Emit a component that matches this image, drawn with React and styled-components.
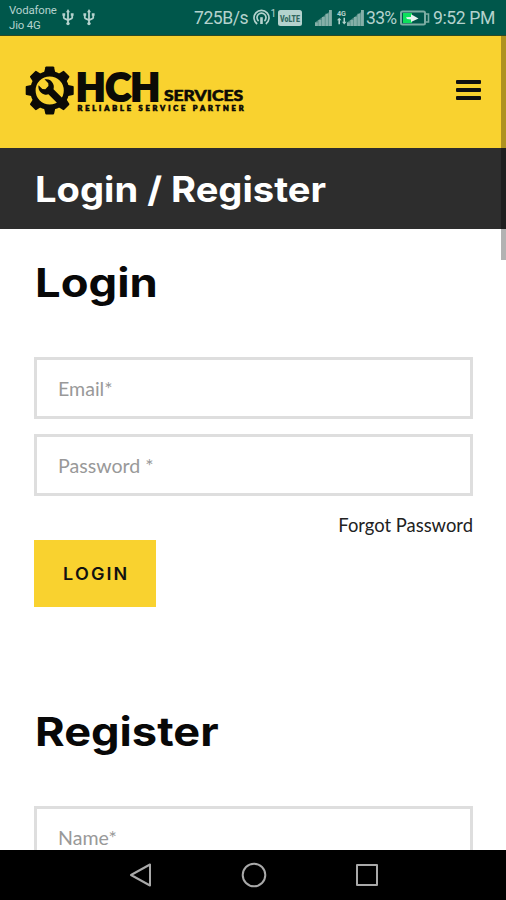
import React from "react";
import styled, { createGlobalStyle } from "styled-components";

const GlobalStyle = createGlobalStyle`
  * { box-sizing: border-box; }
  body { margin: 0; background: #fff; }
`;

const Screen = styled.div`
  position: relative;
  display: flex;
  flex-direction: column;
  width: 506px;
  height: 900px;
  overflow: hidden;
  background: #fff;
  font-family: Lato, "Open Sans", sans-serif;
`;

const StatusBar = styled.header`
  display: flex;
  align-items: center;
  flex: none;
  height: 36px;
  padding-left: 9px;
  background: #00574b;
  border-bottom: 1px solid #2f4a25;
  color: #b4d2cd;
  font-family: Roboto, sans-serif;
`;

const Carrier = styled.div`
  width: 53px;
  font-size: 11.4px;
  line-height: 15.5px;
  letter-spacing: -0.15px;
  padding-top: 1px;
  white-space: nowrap;
`;

const StatusText = styled.span`
  flex: none;
  width: ${(p) => p.$width}px;
  margin-left: ${(p) => p.$gap || 0}px;
  font-size: ${(p) => p.$size || 18}px;
  line-height: 20px;
  letter-spacing: ${(p) => p.$spacing || 0}px;
  white-space: nowrap;
`;

const StatusIcon = styled.svg`
  flex: none;
  display: block;
  overflow: visible;
  margin-left: ${(p) => p.$gap || 0}px;
`;

const BrandBar = styled.div`
  display: flex;
  align-items: center;
  justify-content: space-between;
  flex: none;
  height: 112px;
  padding: 0 25px 4px 20px;
  background: #f9d22f;
`;

const MenuButton = styled.button`
  display: flex;
  flex-direction: column;
  gap: 4.5px;
  width: 25px;
  padding: 0;
  border: 0;
  background: none;
`;

const MenuLine = styled.span`
  height: 3.6px;
  border-radius: 1px;
  background: #111;
`;

const TitleBand = styled.div`
  display: flex;
  flex: none;
  align-items: center;
  height: 81px;
  padding: 0 35px;
  background: #2d2d2d;
`;

const Heading = styled.h2`
  margin: 0;
  width: max-content;
  color: ${(p) => p.$color || "#080808"};
  font-family: Inter, sans-serif;
  font-weight: 700;
  font-size: ${(p) => p.$size || 40}px;
  line-height: 48px;
  white-space: nowrap;
  transform: scaleX(${(p) => p.$stretch || 1});
  transform-origin: left;
`;

const Content = styled.main`
  flex: 1;
  min-height: 0;
  overflow: hidden;
  padding: 30px 33px 0 34px;
`;

const Section = styled.section`
  height: ${(p) => p.$height || "auto"};
  ${Heading} { margin-left: 1px; }
`;

const Fields = styled.div`
  display: flex;
  flex-direction: column;
  gap: 15px;
  margin-top: 50px;
`;

const Field = styled.input`
  display: block;
  width: 100%;
  height: 62px;
  padding: 0 21px;
  border: 3px solid #dedede;
  border-radius: 0;
  background: #fff;
  font: 400 19.6px Lato, sans-serif;
  outline: none;
  &::placeholder { color: #999; opacity: 1; }
`;

const ForgotRow = styled.div`
  display: flex;
  justify-content: flex-end;
  height: 44px;
  padding-top: 17px;
  color: #222;
  font-size: 18.4px;
  line-height: 24px;
`;

const SubmitButton = styled.button`
  display: block;
  width: 122px;
  height: 67px;
  padding: 0 0 0 2px;
  border: 0;
  background: #f9d22f;
  color: #111;
  font: 600 17px Inter, sans-serif;
  letter-spacing: 2px;
`;

const SubmitLabel = styled.span`
  display: inline-block;
  transform: scaleX(1.06);
`;

const NavBar = styled.nav`
  display: flex;
  flex: none;
  align-items: center;
  justify-content: center;
  gap: 88px;
  height: 50px;
  padding-left: 2px;
  background: #000;
`;

const NavIcon = styled.svg`
  display: block;
  fill: none;
  stroke: #a9a9a9;
  stroke-width: 2;
  stroke-linejoin: round;
`;

const ScrollThumb = styled.div`
  position: absolute;
  top: 36px;
  right: 0;
  width: 5px;
  height: 224px;
  background: rgba(0, 0, 0, 0.3);
`;

function Usb({ gap }) {
  return (
    <StatusIcon $gap={gap} width="12" height="17" viewBox="0 0 12 17" fill="none" stroke="#b4d2cd" strokeWidth="1.8">
      <path d="M6 2v12M1.8 5.5v3.2c0 1.4 4.2 1.6 4.2 3.3M10.2 5.5v3.2c0 1.4-4.2 1.6-4.2 3.3" />
      <path d="M6 0 8 3.2H4ZM.4 4.2h2.8v2.6H.4ZM8.8 4.2h2.8v2.6H8.8Z" fill="#b4d2cd" stroke="none" />
      <circle cx="6" cy="14.6" r="1.7" fill="#b4d2cd" stroke="none" />
    </StatusIcon>
  );
}

function Signal({ gap }) {
  return (
    <StatusIcon $gap={gap} width="17" height="16" viewBox="0 0 17 16" fill="#86afa8">
      <path d="M0 12.5h2.8V16H0ZM3.5 10h2.8v6H3.5ZM7 7h2.8v9H7ZM10.5 3.8h2.8V16h-2.8ZM14 0h2.8v16H14Z" />
      <path d="M0 16v-3.5L16.8 0v16Z" opacity=".6" />
    </StatusIcon>
  );
}

const TEETH = [0, 45, 90, 135, 180, 225, 270, 315];

function Logo() {
  return (
    <svg width="230" height="60" viewBox="20 60 230 60" fill="#0c0b06">
      <g transform="translate(49.7 90.5)">
        {TEETH.map((angle) => (
          <path key={angle} d="M-6-16-4.4-23.3Q-4.2-24-3.4-24H3.4Q4.2-24 4.4-23.3L6-16Z" transform={`rotate(${angle})`} />
        ))}
        <circle r="16.8" fill="none" stroke="#0c0b06" strokeWidth="5.4" />
        <g transform="rotate(-45)">
          <path d="M-3.6 17V1.8A7.8 7.8 0 0 1-4.2-11.6V-6.2L-2.2-4H2.2L4.2-6.2V-11.6A7.8 7.8 0 0 1 3.6 1.8V17Z" />
        </g>
      </g>
      <g fontFamily="Lato, sans-serif" fontWeight="900" stroke="#0c0b06">
        <text x="76" y="101" fontSize="38" strokeWidth="2.2" textLength="84" lengthAdjust="spacingAndGlyphs">HCH</text>
        <text x="164" y="101.3" fontSize="15.8" strokeWidth=".6" textLength="79" lengthAdjust="spacingAndGlyphs">SERVICES</text>
        <text x="77.5" y="111" fontSize="7.4" strokeWidth=".7" textLength="166" lengthAdjust="spacing">RELIABLE SERVICE PARTNER</text>
      </g>
    </svg>
  );
}

export default function App() {
  return (
    <Screen>
      <GlobalStyle />
      <StatusBar>
        <Carrier>Vodafone<br />Jio 4G</Carrier>
        <Usb />
        <Usb gap={9} />
        <StatusText $gap={99} $width={54} $size={17.6} $spacing={-0.5}>725B/s</StatusText>
        <StatusIcon $gap={5} width="17" height="17" viewBox="0 0 17 17" fill="none" stroke="#b4d2cd" strokeWidth="1.7">
          <path d="M4.2 15A7.5 7.5 0 1 1 12.8 15M5.6 12A4.5 4.5 0 1 1 11.4 12" />
          <path d="M8.5 8.2V15" strokeWidth="2.6" />
        </StatusIcon>
        <StatusIcon width="7" height="17" viewBox="0 0 7 17" fill="#b4d2cd">
          <text x="0.5" y="8" fontSize="10" fontFamily="Roboto">1</text>
        </StatusIcon>
        <StatusIcon $gap={1} width="24" height="16" viewBox="0 0 24 16">
          <rect width="24" height="16" rx="2.5" fill="#b4d2cd" />
          <text x="2" y="11.5" fontSize="9.5" fontWeight="900" fontFamily="Roboto" fill="#31675d" textLength="20" lengthAdjust="spacingAndGlyphs">VoLTE</text>
        </StatusIcon>
        <Signal gap={13} />
        <StatusIcon $gap={5} width="10" height="17" viewBox="0 0 10 17" fill="#b4d2cd">
          <text x="0" y="7" fontSize="8" fontWeight="700" fontFamily="Roboto" textLength="9" lengthAdjust="spacingAndGlyphs">4G</text>
          <path d="M0 11.2 2.2 8.7l2.3 2.5H3v4H1.4v-4ZM5 12.7h1.5v-4H8v4h1.5L7.2 15.5Z" />
        </StatusIcon>
        <Signal gap={0} />
        <StatusText $gap={2} $width={32} $size={17.5} $spacing={-0.7}>33%</StatusText>
        <StatusIcon $gap={2} width="30" height="16" viewBox="0 0 30 16">
          <rect x="1" y="1.5" width="24" height="13" rx="1.5" fill="none" stroke="#7dada3" strokeWidth="2" />
          <path d="M26 4h2.5v8H26" fill="none" stroke="#7dada3" strokeWidth="1.6" />
          <path d="M3 3h9v10H3Z" fill="#0ee05c" />
          <path d="M6 7.3 11 7V4.2L18.5 8.5 11 12V9.5L7 9Z" fill="#e5f3ef" />
        </StatusIcon>
        <StatusText $gap={3} $width={63} $size={17.6} $spacing={-0.4}>9:52 PM</StatusText>
      </StatusBar>

      <BrandBar>
        <Logo />
        <MenuButton aria-label="Menu">
          <MenuLine />
          <MenuLine />
          <MenuLine />
        </MenuButton>
      </BrandBar>

      <TitleBand>
        <Heading as="h1" $color="#fff" $size={35} $stretch={1.09}>Login / Register</Heading>
      </TitleBand>

      <Content>
        <Section $height="449px">
          <Heading $stretch={1.135}>Login</Heading>
          <Fields>
            <Field placeholder="Email*" />
            <Field placeholder="Password *" />
          </Fields>
          <ForgotRow>Forgot Password</ForgotRow>
          <SubmitButton><SubmitLabel>LOGIN</SubmitLabel></SubmitButton>
        </Section>
        <Section>
          <Heading $stretch={1.13}>Register</Heading>
          <Fields>
            <Field placeholder="Name*" />
          </Fields>
        </Section>
      </Content>

      <NavBar>
        <NavIcon width="24" height="26" viewBox="0 0 24 26"><path d="M2 13 21 2.5V23.5Z" /></NavIcon>
        <NavIcon width="26" height="26" viewBox="0 0 26 26"><circle cx="13" cy="13" r="11.3" /></NavIcon>
        <NavIcon width="24" height="26" viewBox="0 0 24 26"><path d="M2 3H22V23H2Z" /></NavIcon>
      </NavBar>
      <ScrollThumb />
    </Screen>
  );
}
